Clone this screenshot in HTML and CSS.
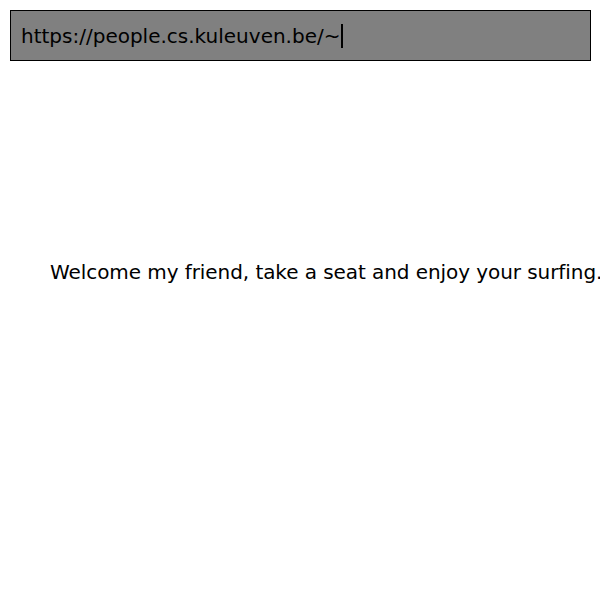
FILE: index.html
```html
<!DOCTYPE html>
<html>
<head>
<meta charset="utf-8">
<link rel="stylesheet" href="styles.css">
</head>
<body>
<div class="urlbar"><span class="url">https://people.cs.kuleuven.be/~</span><span class="caret"></span></div>
<div class="welcome">Welcome my friend, take a seat and enjoy your surfing.</div>
</body>
</html>
```
FILE: styles.css
```css
html, body {
  margin: 0;
  padding: 0;
  background: #fff;
  overflow: hidden;
}
body {
  font-family: "DejaVu Sans", sans-serif;
  color: #000;
  width: 600px;
  height: 600px;
}
.urlbar {
  margin: 10px 0 0 10px;
  width: 569px;
  height: 49px;
  border: 1px solid #000;
  background: #808080;
  display: flex;
  align-items: center;
  padding-left: 10px;
  font-size: 20px;
  -webkit-font-smoothing: none;
}
.caret {
  display: inline-block;
  width: 2px;
  height: 24px;
  background: #000;
  margin-left: 1px;
}
.welcome {
  margin-top: 199px;
  padding-left: 50px;
  font-size: 20px;
  letter-spacing: -0.07px;
  white-space: nowrap;
  -webkit-font-smoothing: none;
}
```
